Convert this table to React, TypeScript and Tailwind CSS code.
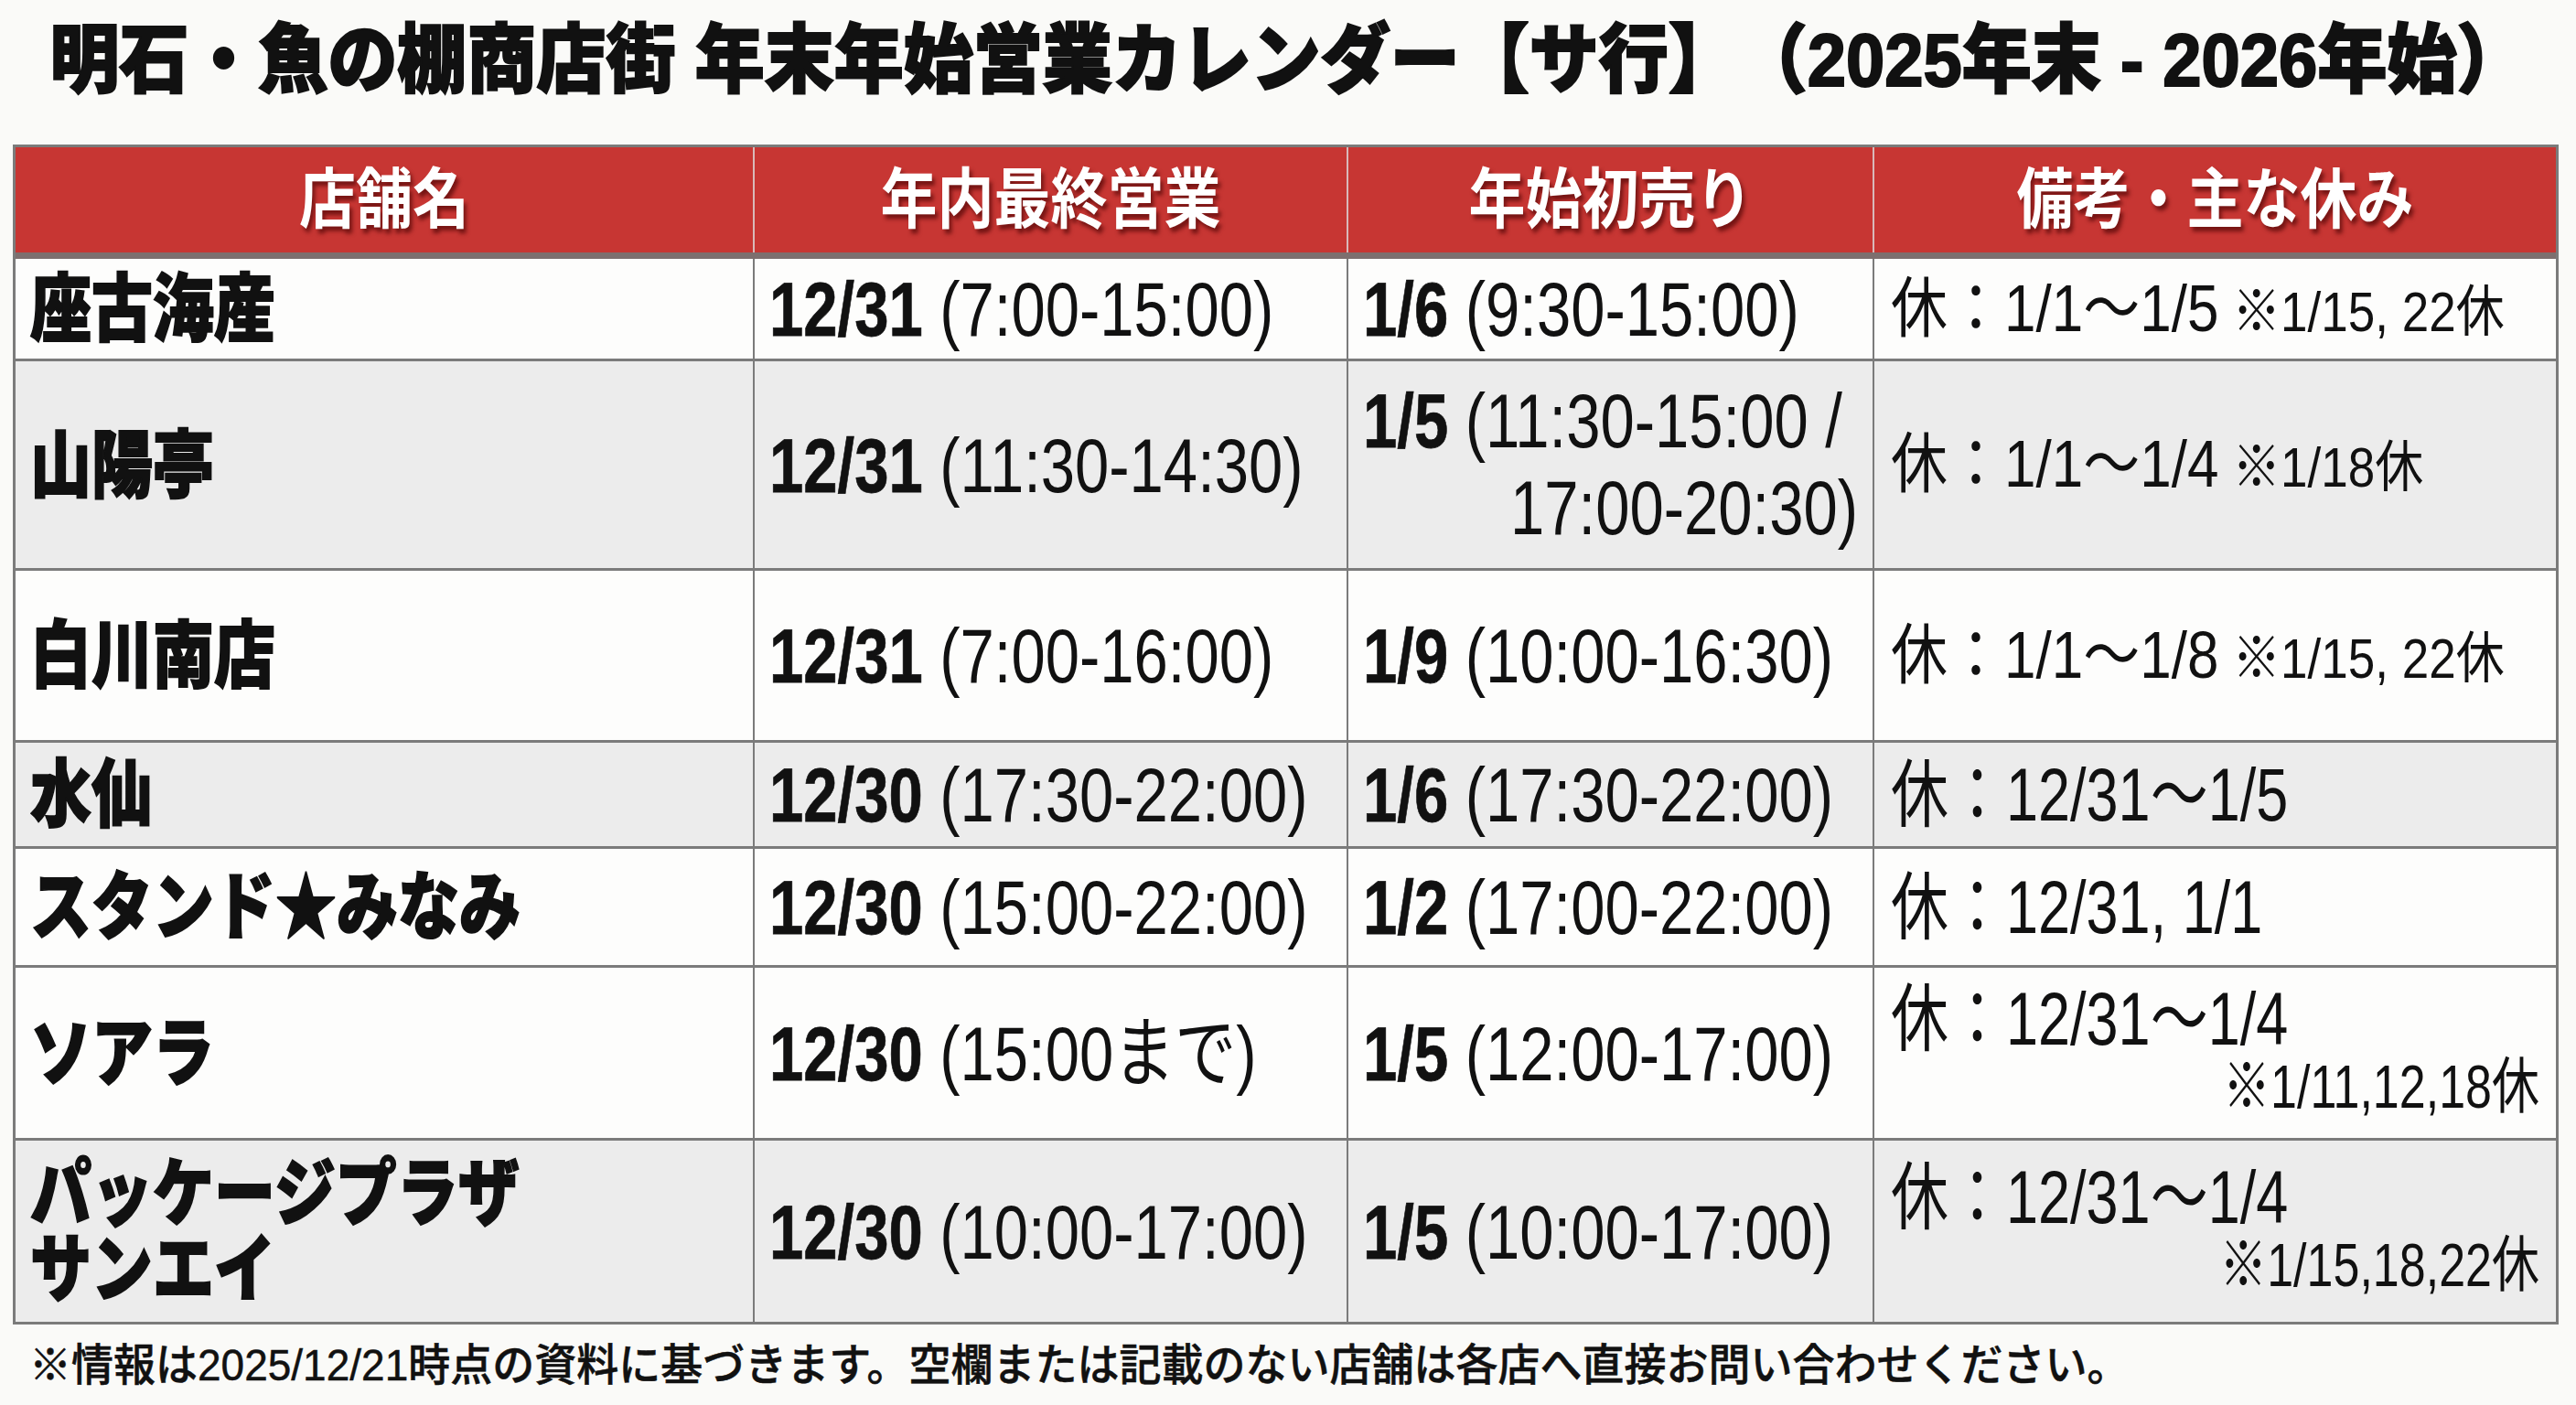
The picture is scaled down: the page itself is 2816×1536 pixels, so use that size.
import React from 'react';

type Row = {
  name: string[];
  last: [string, string];
  first: React.ReactNode;
  note: React.ReactNode;
  bg: string;
  h: string;
  border?: boolean;
};

const LINE = 'border-[#7b7b7b]';

function DateTime({ date, time }: { date: string; time: string }) {
  return (
    <div className="scale-y-[1.25] text-[67px] leading-none whitespace-nowrap">
      <span className="font-bold [-webkit-text-stroke:0.6px_#111]">{date}</span>
      <span>{time}</span>
    </div>
  );
}

function NoteInline({ main, sub }: { main: string; sub?: string }) {
  return (
    <div className="scale-y-[1.15] text-[62px] leading-none whitespace-nowrap">
      {main}
      {sub && <span className="text-[53px]"> {sub}</span>}
    </div>
  );
}

function NoteBig({ main, sub }: { main: string; sub?: string }) {
  return (
    <div className="w-full scale-y-[1.28] whitespace-nowrap leading-[58px]">
      <div className="text-[63px]">{main}</div>
      {sub && <div className="text-right text-[52px]">{sub}</div>}
    </div>
  );
}

const rows: Row[] = [
  {
    name: ['座古海産'],
    last: ['12/31', ' (7:00-15:00)'],
    first: <DateTime date="1/6" time=" (9:30-15:00)" />,
    note: <NoteInline main="休：1/1～1/5" sub="※1/15, 22休" />,
    bg: 'bg-[#fdfdfc]',
    h: 'h-[112px]',
  },
  {
    name: ['山陽亭'],
    last: ['12/31', ' (11:30-14:30)'],
    first: (
      <div className="w-full scale-y-[1.25] text-[67px] leading-[76px] whitespace-nowrap">
        <div>
          <span className="font-bold [-webkit-text-stroke:0.6px_#111]">1/5</span> (11:30-15:00 /
        </div>
        <div className="text-right">17:00-20:30)</div>
      </div>
    ),
    note: <NoteInline main="休：1/1～1/4" sub="※1/18休" />,
    bg: 'bg-[#ececec]',
    h: 'h-[229px]',
  },
  {
    name: ['白川南店'],
    last: ['12/31', ' (7:00-16:00)'],
    first: <DateTime date="1/9" time=" (10:00-16:30)" />,
    note: <NoteInline main="休：1/1～1/8" sub="※1/15, 22休" />,
    bg: 'bg-[#fdfdfc]',
    h: 'h-[188px]',
  },
  {
    name: ['水仙'],
    last: ['12/30', ' (17:30-22:00)'],
    first: <DateTime date="1/6" time=" (17:30-22:00)" />,
    note: <NoteBig main="休：12/31～1/5" />,
    bg: 'bg-[#ececec]',
    h: 'h-[116px]',
  },
  {
    name: ['スタンド★みなみ'],
    last: ['12/30', ' (15:00-22:00)'],
    first: <DateTime date="1/2" time=" (17:00-22:00)" />,
    note: <NoteBig main="休：12/31, 1/1" />,
    bg: 'bg-[#fdfdfc]',
    h: 'h-[130px]',
  },
  {
    name: ['ソアラ'],
    last: ['12/30', ' (15:00まで)'],
    first: <DateTime date="1/5" time=" (12:00-17:00)" />,
    note: <NoteBig main="休：12/31～1/4" sub="※1/11,12,18休" />,
    bg: 'bg-[#fdfdfc]',
    h: 'h-[189px]',
  },
  {
    name: ['パッケージプラザ', 'サンエイ'],
    last: ['12/30', ' (10:00-17:00)'],
    first: <DateTime date="1/5" time=" (10:00-17:00)" />,
    note: <NoteBig main="休：12/31～1/4" sub="※1/15,18,22休" />,
    bg: 'bg-[#ececec]',
    h: 'h-[198px]',
    border: false,
  },
];

const headers = ['店舗名', '年内最終営業', '年始初売り', '備考・主な休み'];

export default function App() {
  return (
    <div className="min-h-screen w-[2816px] h-[1536px] overflow-hidden bg-[#fafaf8] text-[#111] font-['Liberation_Sans','Noto_Sans_CJK_JP',sans-serif] [text-spacing-trim:space-all]">
      {/* Title */}
      <div className="flex h-[132px] items-center justify-center">
        <h1 className="scale-y-[1.08] text-[76px] font-black leading-none whitespace-nowrap [-webkit-text-stroke:2px_#111]">
          明石・魚の棚商店街 年末年始営業カレンダー【サ行】（2025年末 - 2026年始）
        </h1>
      </div>

      {/* Table */}
      <div className={`ml-[14px] mt-[26px] w-[2783px] border-[3px] ${LINE}`}>
        <div className="grid h-[122px] grid-cols-[808px_649px_575px_745px] border-b-[7px] border-b-[#7d6f6f] bg-[#c73633]">
          {headers.map((h, i) => (
            <div
              key={h}
              className={`flex items-center justify-center ${i < 3 ? 'border-r-2 border-r-[#d9b9b9]' : ''}`}
            >
              <span className="scale-y-[1.15] text-[62px] font-bold leading-none text-white [text-shadow:3px_4px_4px_rgba(90,10,10,0.75)]">
                {h}
              </span>
            </div>
          ))}
        </div>

        {rows.map((r, idx) => (
          <div
            key={idx}
            className={`grid grid-cols-[808px_649px_575px_745px] ${r.h} ${r.bg} ${r.border === false ? '' : `border-b-[3px] ${LINE}`}`}
          >
            <div className={`flex items-center border-r-2 px-[16px] ${LINE}`}>
              <div className="scale-y-[1.2] text-[67px] font-black leading-[69px] whitespace-nowrap [-webkit-text-stroke:1.5px_#111]">
                {r.name.map((n) => (
                  <div key={n}>{n}</div>
                ))}
              </div>
            </div>
            <div className={`flex items-center border-r-2 px-[16px] ${LINE}`}>
              <DateTime date={r.last[0]} time={r.last[1]} />
            </div>
            <div className={`flex items-center border-r-2 px-[16px] ${LINE}`}>{r.first}</div>
            <div className="flex items-center px-[18px]">{r.note}</div>
          </div>
        ))}
      </div>

      {/* Footnote */}
      <p className="mt-[20px] ml-[32px] scale-y-[1.05] origin-left text-[46px] font-medium leading-[48px] whitespace-nowrap [-webkit-text-stroke:0.5px_#111]">
        ※情報は2025/12/21時点の資料に基づきます。空欄または記載のない店舗は各店へ直接お問い合わせください。
      </p>
    </div>
  );
}
